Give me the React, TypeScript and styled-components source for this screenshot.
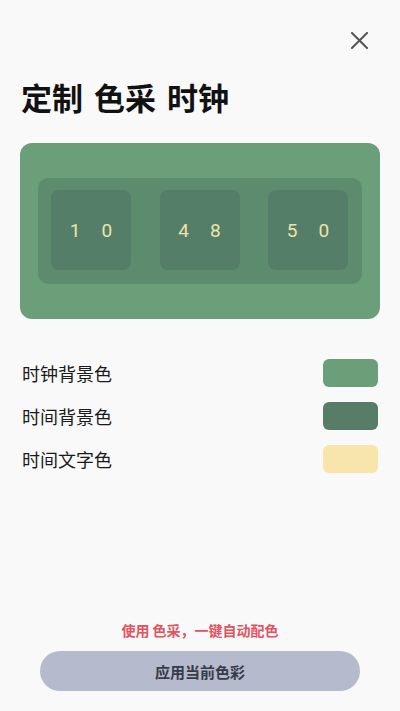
import React from "react";
import styled, { createGlobalStyle } from "styled-components";

const GlobalStyle = createGlobalStyle`
  html, body {
    margin: 0;
    padding: 0;
    background: #f9f9f9;
  }
  body {
    font-family: "Noto Sans", "Noto Sans CJK SC", sans-serif;
  }
  * {
    box-sizing: border-box;
  }
`;

const Page = styled.div`
  width: 400px;
  height: 711px;
  display: flex;
  flex-direction: column;
  background: #f9f9f9;
`;

const TopBar = styled.div`
  display: flex;
  justify-content: flex-end;
  padding: 32px 32px 0 0;
  height: 49px;
`;

const CloseButton = styled.button`
  width: 17px;
  height: 17px;
  padding: 0;
  border: none;
  background: transparent;
  color: #555;
  display: flex;
`;

const Title = styled.h1`
  margin: 26px 0 0 21px;
  font-size: 31px;
  line-height: 44px;
  font-weight: 700;
  color: #111;
  font-family: "Noto Sans CJK SC", sans-serif;
  word-spacing: 4px;
`;

const ClockCard = styled.div`
  margin: 24px 20px 0 20px;
  height: 176px;
  border-radius: 12px;
  background: #6a9f7a;
  display: flex;
  align-items: flex-start;
  padding: 35px 18px 0 18px;
`;

const ClockBand = styled.div`
  flex: 1;
  display: flex;
  justify-content: space-between;
  padding: 12px 14px 14px 13px;
  border-radius: 10px;
  background: #5c8c6d;
`;

const DigitBox = styled.div`
  width: 80px;
  height: 80px;
  border-radius: 8px;
  background: #557e69;
  display: flex;
  align-items: center;
  justify-content: center;
  gap: 21px;
  color: #efe3a8;
  font-family: "Roboto", sans-serif;
  font-size: 19px;
  padding-top: 1px;
`;

const Settings = styled.div`
  margin: 40px 22px 0 22px;
  display: flex;
  flex-direction: column;
  gap: 15px;
`;

const SettingRow = styled.div`
  display: flex;
  align-items: center;
  justify-content: space-between;
`;

const SettingLabel = styled.span`
  font-family: "Noto Sans CJK SC", sans-serif;
  font-size: 18px;
  color: #1a1a1a;
`;

const Swatch = styled.div<{ $color: string }>`
  width: 55px;
  height: 28px;
  border-radius: 6px;
  background: ${(p) => p.$color};
`;

const Footer = styled.div`
  margin-top: auto;
  padding: 0 40px 20px 40px;
  display: flex;
  flex-direction: column;
  align-items: center;
`;

const Hint = styled.div`
  font-family: "Noto Sans CJK SC", sans-serif;
  font-size: 14px;
  font-weight: 700;
  color: #e2525f;
  line-height: 20px;
  margin-bottom: 11px;
`;

const ApplyButton = styled.button`
  width: 100%;
  height: 40px;
  border: none;
  border-radius: 20px;
  background: #b6bacd;
  color: #363b48;
  font-family: "Noto Sans CJK SC", sans-serif;
  font-size: 15px;
  font-weight: 700;
`;

const settings = [
  { label: "时钟背景色", color: "#6a9f7a" },
  { label: "时间背景色", color: "#577d69" },
  { label: "时间文字色", color: "#f7e5ac" },
];

const time = [
  ["1", "0"],
  ["4", "8"],
  ["5", "0"],
];

export default function App() {
  return (
    <Page>
      <GlobalStyle />
      <TopBar>
        <CloseButton aria-label="关闭">
          <svg width="17" height="17" viewBox="0 0 17 17">
            <path
              d="M1 1 L16 16 M16 1 L1 16"
              stroke="currentColor"
              strokeWidth="2"
              strokeLinecap="square"
            />
          </svg>
        </CloseButton>
      </TopBar>
      <Title>定制 色采 时钟</Title>
      <ClockCard>
        <ClockBand>
          {time.map((pair, i) => (
            <DigitBox key={i}>
              <span>{pair[0]}</span>
              <span>{pair[1]}</span>
            </DigitBox>
          ))}
        </ClockBand>
      </ClockCard>
      <Settings>
        {settings.map((s) => (
          <SettingRow key={s.label}>
            <SettingLabel>{s.label}</SettingLabel>
            <Swatch $color={s.color} />
          </SettingRow>
        ))}
      </Settings>
      <Footer>
        <Hint>使用 色采，一键自动配色</Hint>
        <ApplyButton>应用当前色彩</ApplyButton>
      </Footer>
    </Page>
  );
}
